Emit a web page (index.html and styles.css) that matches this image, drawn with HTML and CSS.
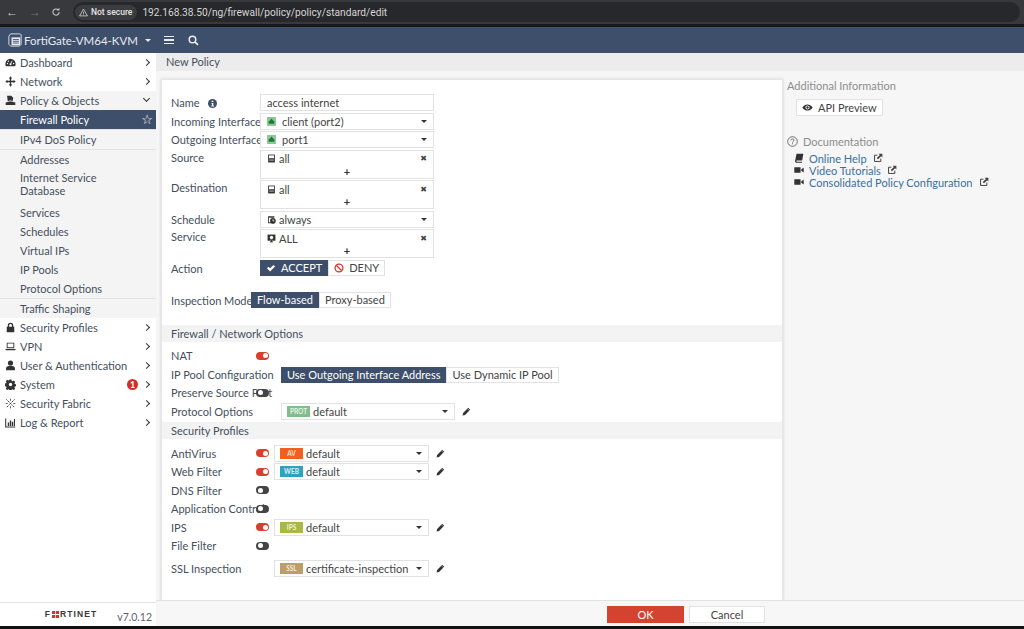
FILE: index.html
```html
<!DOCTYPE html>
<html lang="en">
<head>
    <meta charset="UTF-8" />
    <meta name="viewport" content="width=device-width, initial-scale=1.0" />
    <title>FortiGate-VM64-KVM - New Policy</title>
    <link rel="stylesheet" href="styles.css">
</head>
<body>

    <svg class="sprite" width="0" height="0">
        <symbol id="i-gauge" viewBox="0 0 16 16"><path d="M8 2.5A7.5 7.5 0 0 0 .5 10c0 1.300.3 2.500.9 3.500h13.200c.6-1 .9-2.200.9-3.500A7.500 7.500 0 0 0 8 2.500z" fill="currentColor"/><circle cx="8" cy="10.500" r="1.500" fill="#fff"/><path d="M8 10.500 10.500 5.500" stroke="#fff" stroke-width="1.200"/><circle cx="3.500" cy="9.500" r="1" fill="#fff"/><circle cx="5" cy="6" r="1" fill="#fff"/><circle cx="12.500" cy="9.500" r="1" fill="#fff"/></symbol>
        <symbol id="i-move" viewBox="0 0 16 16"><path d="M8 .5 10.500 3.500H9V7h3.500V5.500L15.500 8l-3 2.500V9H9v3.500h1.500L8 15.500l-2.500-3H7V9H3.500v1.500L.5 8l3-2.500V7H7V3.500H5.500z" fill="currentColor"/></symbol>
        <symbol id="i-policy" viewBox="0 0 16 16"><path d="M3 1h6l3 3 -1 5 -3-1.500L4 9zM1 11l3-1 4-1 4 1 3 1v3.500H1z" fill="currentColor"/></symbol>
        <symbol id="i-lock" viewBox="0 0 16 16"><path d="M4 7V5a4 4 0 0 1 8 0v2h1.500v8h-11V7zm2 0h4V5a2 2 0 0 0-4 0z" fill="currentColor"/></symbol>
        <symbol id="i-laptop" viewBox="0 0 16 16"><path d="M2.500 2.500h11v8h-11zm1.300 1.300v5.400h8.400V3.800zM.5 11.500h15v1l-1 1h-13l-1-1z" fill="currentColor" fill-rule="evenodd"/></symbol>
        <symbol id="i-user" viewBox="0 0 16 16"><circle cx="8" cy="4.500" r="3.800" fill="currentColor"/><path d="M1.500 15v-2.500C1.500 10 3.500 8.800 5.500 8.800h5c2 0 4 1.200 4 3.700V15z" fill="currentColor"/></symbol>
        <symbol id="i-gear" viewBox="0 0 16 16"><path d="M6.600.8h2.800l.4 2 1.400.6 1.700-1.100 2 2-1.100 1.700.6 1.400 2 .4v2.800l-2 .4-.6 1.400 1.100 1.700-2 2-1.700-1.100-1.400.6-.4 2H6.600l-.4-2-1.400-.6-1.700 1.100-2-2 1.100-1.700-.6-1.400-2-.4V6.600l2-.4.6-1.400-1.100-1.700 2-2 1.700 1.100 1.400-.6zM8 5.500a2.500 2.500 0 1 0 0 5 2.500 2.500 0 0 0 0-5z" fill="currentColor" fill-rule="evenodd"/></symbol>
        <symbol id="i-fabric" viewBox="0 0 16 16"><path d="M2 2l12 12M14 2 2 14" stroke="currentColor" stroke-width="1.300" stroke-dasharray="2.400 1"/><path d="M8 1v3M8 12v3M1 8h3M12 8h3" stroke="currentColor" stroke-width="1.100"/></symbol>
        <symbol id="i-chart" viewBox="0 0 16 16"><path d="M1 2v12.500h14" fill="none" stroke="currentColor" stroke-width="1.500"/><path d="M4 8h2v5H4zM7 5h2v8H7zm3 2h2v6h-2zm3-4h1.500v10H13z" fill="currentColor"/></symbol>
        <symbol id="i-iface" viewBox="0 0 16 16"><path d="M0 0h16v16H0z" fill="#8fc79a"/><path d="M3 12V7h2V5h2V3h2v2h2v2h2v5z" fill="#1c7a33"/></symbol>
        <symbol id="i-addr" viewBox="0 0 16 16"><path d="M2 1h12v14H2z" fill="#333"/><path d="M3.500 2.500h9v5h-9z" fill="#fff"/><path d="M4 10h8v1.500H4z" fill="#ddd"/></symbol>
        <symbol id="i-sched" viewBox="0 0 16 16"><path d="M2 2h11v3H3.500v8H7v1.500H2z" fill="#333"/><circle cx="10.500" cy="10.500" r="5" fill="#333"/><path d="M10.500 7.500v3h2.500" stroke="#fff" stroke-width="1.300" fill="none"/></symbol>
        <symbol id="i-svc" viewBox="0 0 16 16"><path d="M1 1h14v11H1z" fill="#333"/><circle cx="8" cy="6" r="3" fill="#fff"/><path d="M5 15l1.500-5h3l1.500 5z" fill="#333" stroke="#fff" stroke-width=".6"/></symbol>
        <symbol id="i-pen" viewBox="0 0 16 16"><path d="M11 1.500l3.500 3.500L5.500 14 1 15l1-4.500z" fill="currentColor"/><path d="M9.500 3 13 6.500" stroke="#fff" stroke-width=".9"/></symbol>
        <symbol id="i-ext" viewBox="0 0 16 16"><path d="M7 3.500H2.500v10h10V9" fill="none" stroke="currentColor" stroke-width="1.600"/><path d="M9 1h6v6l-2-2-5 5-2-2 5-5z" fill="currentColor"/></symbol>
        <symbol id="i-video" viewBox="0 0 16 16"><path d="M.5 3.500h10v9H.5zM11.500 7l4-3v8l-4-3z" fill="currentColor"/></symbol>
        <symbol id="i-book" viewBox="0 0 16 16"><path d="M4 1h11l-2 11H4.500c-1.200 0-1 2 0 2H13l-.3 1.500H3.500C1.800 15.500 1.500 14 1.800 12.500z" fill="currentColor"/></symbol>
    </svg>

    <div class="browser-bar">
        <span class="nav-btn">&#8592;</span>
        <span class="nav-btn nav-off">&#8594;</span>
        <svg class="reload" viewBox="0 0 16 16"><path d="M13 8a5 5 0 1 1-1.500-3.500" fill="none" stroke="currentColor" stroke-width="1.700"/><path d="M13.500 1v4.500H9z" fill="currentColor"/></svg>
        <div class="url-pill">
            <span class="secure-chip"><svg viewBox="0 0 16 16"><path d="M8 2 15 14H1z" fill="none" stroke="currentColor" stroke-width="1.300"/><path d="M8 6.500v4M8 11.500v1.200" stroke="currentColor" stroke-width="1.200"/></svg>Not secure</span>
            <span class="url-text">192.168.38.50/ng/firewall/policy/policy/standard/edit</span>
        </div>
    </div>
    <div class="browser-edge"></div>

    <header class="top-nav">
        <div class="device">
            <svg class="device-icon" viewBox="0 0 16 16"><path d="M1 3.500 3 1h11l1 1v11l-2 2H3l-2-2z" fill="none" stroke="currentColor" stroke-width="1"/><path d="M4 5h10v9H4z" fill="currentColor"/><path d="M5.500 7.500h7M5.500 9.500h7M5.500 11.500h7" stroke="#3e4f6b" stroke-width="1"/></svg>
            <span class="device-name">FortiGate-VM64-KVM</span>
            <span class="caret caret-light"></span>
        </div>
        <div class="burger"><i></i><i></i><i></i></div>
        <svg class="search" viewBox="0 0 16 16"><circle cx="6.500" cy="6.500" r="4.800" fill="none" stroke="currentColor" stroke-width="2.200"/><path d="M10 10l4.500 4.500" stroke="currentColor" stroke-width="2.500"/></svg>
    </header>

    <div class="app-body">
        <nav class="sidebar">
            <div class="menu">
                <div class="menu-item"><svg class="menu-icon"><use href="#i-gauge"/></svg>Dashboard<span class="chev"></span></div>
                <div class="menu-item"><svg class="menu-icon"><use href="#i-move"/></svg>Network<span class="chev"></span></div>
                <div class="menu-item menu-open"><svg class="menu-icon"><use href="#i-policy"/></svg>Policy &amp; Objects<span class="chev chev-down"></span></div>
                <div class="submenu">
                    <div class="sub-item sub-active">Firewall Policy<span class="star">&#9734;</span></div>
                    <div class="sub-item sub-ruled">IPv4 DoS Policy</div>
                    <div class="sub-item sub-ruled">Addresses</div>
                    <div class="sub-item sub-tall">Internet Service Database</div>
                    <div class="sub-item">Services</div>
                    <div class="sub-item">Schedules</div>
                    <div class="sub-item">Virtual IPs</div>
                    <div class="sub-item">IP Pools</div>
                    <div class="sub-item">Protocol Options</div>
                    <div class="sub-item sub-ruled">Traffic Shaping</div>
                </div>
                <div class="menu-item"><svg class="menu-icon"><use href="#i-lock"/></svg>Security Profiles<span class="chev"></span></div>
                <div class="menu-item"><svg class="menu-icon"><use href="#i-laptop"/></svg>VPN<span class="chev"></span></div>
                <div class="menu-item"><svg class="menu-icon"><use href="#i-user"/></svg>User &amp; Authentication<span class="chev"></span></div>
                <div class="menu-item"><svg class="menu-icon"><use href="#i-gear"/></svg>System<span class="badge">1</span><span class="chev chev-badge"></span></div>
                <div class="menu-item"><svg class="menu-icon"><use href="#i-fabric"/></svg>Security Fabric<span class="chev"></span></div>
                <div class="menu-item"><svg class="menu-icon"><use href="#i-chart"/></svg>Log &amp; Report<span class="chev"></span></div>
            </div>
            <div class="side-foot">
                <span class="logo">F<svg class="logo-o" viewBox="0 0 9 9"><path d="M0 0h4v4H0zM5 0h4v4H5zM0 5h4v4H0zM5 5h4v4H5z" fill="#d8322a"/></svg>RTINET</span>
                <span class="version">v7.0.12</span>
            </div>
        </nav>

        <main class="page">
            <div class="page-title">New Policy</div>
            <div class="page-split">
                <section class="card">
                    <div class="fields">
                        <div class="row"><label>Name <svg class="info" viewBox="0 0 16 16"><circle cx="8" cy="8" r="8" fill="currentColor"/><path d="M6.500 3h3v2.500h-3zM6 7h3.500v5H11v1.500H5.500V12H7V8.500H6z" fill="#fff"/></svg></label><div class="box box-text">access internet</div></div>
                        <div class="row"><label>Incoming Interface</label><div class="box"><svg class="if-icon"><use href="#i-iface"/></svg>client (port2)<span class="caret"></span></div></div>
                        <div class="row"><label>Outgoing Interface</label><div class="box"><svg class="if-icon"><use href="#i-iface"/></svg>port1<span class="caret"></span></div></div>
                        <div class="row row-multi"><label>Source</label><div class="box box-multi"><div class="entry"><svg class="obj-icon"><use href="#i-addr"/></svg>all<span class="close">&#10006;</span></div><div class="plus">+</div></div></div>
                        <div class="row row-multi"><label>Destination</label><div class="box box-multi"><div class="entry"><svg class="obj-icon"><use href="#i-addr"/></svg>all<span class="close">&#10006;</span></div><div class="plus">+</div></div></div>
                        <div class="row"><label>Schedule</label><div class="box"><svg class="obj-icon"><use href="#i-sched"/></svg>always<span class="caret"></span></div></div>
                        <div class="row row-multi"><label>Service</label><div class="box box-multi"><div class="entry"><svg class="obj-icon"><use href="#i-svc"/></svg>ALL<span class="close">&#10006;</span></div><div class="plus">+</div></div></div>
                        <div class="row"><label>Action</label>
                            <div class="switch">
                                <span class="opt opt-on opt-action"><svg class="opt-icon" viewBox="0 0 16 16"><path d="M1.500 8.500 4 6l2.500 2.500L12 3l2.500 2.500-8 8z" fill="currentColor"/></svg>ACCEPT</span>
                                <span class="opt opt-action"><svg class="opt-icon opt-deny" viewBox="0 0 16 16"><circle cx="8" cy="8" r="6.300" fill="none" stroke="currentColor" stroke-width="2"/><path d="M3.500 3.500l9 9" stroke="currentColor" stroke-width="2"/></svg>DENY</span>
                            </div>
                        </div>
                        <div class="row row-mode"><label class="label-auto">Inspection Mode</label>
                            <div class="switch">
                                <span class="opt opt-on">Flow-based</span>
                                <span class="opt">Proxy-based</span>
                            </div>
                        </div>
                    </div>

                    <h3 class="section-head">Firewall / Network Options</h3>
                    <div class="fields">
                        <div class="row row-toggle"><label class="label-wide">NAT</label><span class="toggle toggle-on"></span></div>
                        <div class="row"><label class="label-pool">IP Pool Configuration</label>
                            <div class="switch">
                                <span class="opt opt-on">Use Outgoing Interface Address</span>
                                <span class="opt">Use Dynamic IP Pool</span>
                            </div>
                        </div>
                        <div class="row row-toggle"><label class="label-wide">Preserve Source Port</label><span class="toggle"></span></div>
                        <div class="row"><label class="label-pool">Protocol Options</label>
                            <div class="box box-proto"><span class="tag tag-prot">PROT</span>default<span class="caret"></span></div>
                            <svg class="pen"><use href="#i-pen"/></svg>
                        </div>
                    </div>

                    <h3 class="section-head">Security Profiles</h3>
                    <div class="fields fields-sec">
                        <div class="row"><label class="label-sec">AntiVirus</label><span class="toggle toggle-on"></span>
                            <div class="box box-prof"><span class="tag tag-av">AV</span>default<span class="caret"></span></div><svg class="pen"><use href="#i-pen"/></svg></div>
                        <div class="row"><label class="label-sec">Web Filter</label><span class="toggle toggle-on"></span>
                            <div class="box box-prof"><span class="tag tag-web">WEB</span>default<span class="caret"></span></div><svg class="pen"><use href="#i-pen"/></svg></div>
                        <div class="row"><label class="label-sec">DNS Filter</label><span class="toggle"></span></div>
                        <div class="row"><label class="label-sec">Application Control</label><span class="toggle"></span></div>
                        <div class="row"><label class="label-sec">IPS</label><span class="toggle toggle-on"></span>
                            <div class="box box-prof"><span class="tag tag-ips">IPS</span>default<span class="caret"></span></div><svg class="pen"><use href="#i-pen"/></svg></div>
                        <div class="row"><label class="label-sec">File Filter</label><span class="toggle"></span></div>
                        <div class="row row-ssl"><label class="label-sec">SSL Inspection</label><span class="toggle-gap"></span>
                            <div class="box box-prof"><span class="tag tag-ssl">SSL</span>certificate-inspection<span class="caret"></span></div><svg class="pen"><use href="#i-pen"/></svg></div>
                    </div>
                </section>

                <aside class="info-panel">
                    <div class="panel-title">Additional Information</div>
                    <div class="api-btn"><svg class="eye" viewBox="0 0 16 16"><path d="M.5 8C2.500 4.800 5 3.500 8 3.500s5.500 1.300 7.500 4.500c-2 3.200-4.500 4.500-7.500 4.500S2.500 11.200.5 8z" fill="currentColor"/><circle cx="8" cy="8" r="3" fill="#fff"/><circle cx="8" cy="8" r="1.700" fill="currentColor"/></svg>API Preview</div>
                    <div class="doc-head"><svg class="help" viewBox="0 0 16 16"><circle cx="8" cy="8" r="7" fill="none" stroke="currentColor" stroke-width="1.200"/><path d="M5.800 6.300C5.800 4.900 6.900 4.300 8 4.300s2.200.7 2.200 1.900c0 1.500-2.200 1.700-2.200 3.300M8 10.700V12" fill="none" stroke="currentColor" stroke-width="1.300"/></svg>Documentation</div>
                    <div class="doc-link"><svg class="doc-icon"><use href="#i-book"/></svg><a>Online Help</a><svg class="ext"><use href="#i-ext"/></svg></div>
                    <div class="doc-link"><svg class="doc-icon"><use href="#i-video"/></svg><a>Video Tutorials</a><svg class="ext"><use href="#i-ext"/></svg></div>
                    <div class="doc-link"><svg class="doc-icon"><use href="#i-video"/></svg><a>Consolidated Policy Configuration</a><svg class="ext"><use href="#i-ext"/></svg></div>
                </aside>
            </div>
            <footer class="page-foot">
                <button class="btn btn-ok">OK</button>
                <button class="btn">Cancel</button>
            </footer>
        </main>
    </div>
    <div class="browser-edge edge-bottom"></div>

</body>
</html>
```

FILE: styles.css
```css
body {
    font-family: "Lato", sans-serif;
    font-size: 11px;
    color: #444;
    margin: 0;
    width: 1024px;
    height: 629px;
    overflow: hidden;
    display: flex;
    flex-direction: column;
    background-color: #fff;
}

.sprite {
    position: absolute;
}

/* browser chrome */
.browser-bar {
    height: 24px;
    background-color: #38393c;
    color: #c8c8c8;
    display: flex;
    align-items: center;
    font-family: "Roboto", sans-serif;
    flex: none;
}

.nav-btn {
    width: 12px;
    margin-left: 6px;
    margin-right: 5px;
    font-size: 12px;
    text-align: center;
}

.nav-off {
    color: #77787a;
}

.reload {
    width: 10px;
    height: 10px;
    margin-left: 5px;
}

.url-pill {
    margin-left: 12px;
    flex: 1;
    height: 20px;
    margin-right: 4px;
    border-radius: 10px;
    background-color: #27282b;
    display: flex;
    align-items: center;
    padding-left: 2px;
}

.secure-chip {
    display: flex;
    align-items: center;
    height: 15px;
    padding: 0 5px 0 4px;
    border-radius: 8px;
    background-color: #3b3c3f;
    color: #e4e4e4;
    font-size: 8.5px;
    font-weight: 500;
}

.secure-chip svg {
    width: 9px;
    height: 9px;
    margin-right: 3px;
}

.url-text {
    margin-left: 5px;
    color: #d6d6d6;
    font-size: 10.2px;
}

.browser-edge {
    height: 3px;
    background-color: #17181a;
    flex: none;
}

/* fortigate header */
.top-nav {
    height: 26px;
    background-color: #3e4f6b;
    color: #e8ebf0;
    display: flex;
    align-items: center;
    flex: none;
}

.device {
    width: 156px;
    display: flex;
    align-items: center;
    padding-left: 8px;
    box-sizing: border-box;
}

.device-icon {
    width: 14px;
    height: 14px;
    margin-right: 2px;
}

.device-name {
    font-size: 11.5px;
    flex: 1;
}

.caret {
    border-left: 3px solid transparent;
    border-right: 3px solid transparent;
    border-top: 3px solid #333;
}

.caret-light {
    border-top-color: #e8ebf0;
    margin-right: 5px;
}

.burger {
    margin-left: 8px;
    width: 10px;
}

.burger i {
    display: block;
    height: 1.500px;
    background-color: #e8ebf0;
    margin: 2px 0;
}

.search {
    width: 11px;
    height: 11px;
    margin-left: 14px;
}

.app-body {
    flex: 1;
    display: flex;
    min-height: 0;
}

/* sidebar */
.sidebar {
    width: 156px;
    flex: none;
    display: flex;
    flex-direction: column;
    background-color: #fff;
    border-right: 0;
}

.menu {
    flex: 1;
}

.menu-item {
    height: 19px;
    display: flex;
    align-items: center;
    padding-left: 5px;
    color: #454f5c;
    position: relative;
}

.menu-open {
    background-color: #f4f4f4;
}

.menu-icon {
    width: 11px;
    height: 11px;
    margin-right: 4px;
    color: #333;
    flex: none;
}

.chev {
    position: absolute;
    right: 7px;
    top: 7px;
    width: 4px;
    height: 4px;
    border-top: 1.500px solid #333;
    border-right: 1.500px solid #333;
    transform: rotate(45deg);
}

.chev-down {
    transform: rotate(135deg);
    top: 5px;
}

.badge {
    position: absolute;
    right: 18px;
    top: 4px;
    width: 11px;
    height: 11px;
    border-radius: 50%;
    background-color: #cf2f26;
    color: #fff;
    font-size: 9px;
    font-weight: 700;
    line-height: 11px;
    text-align: center;
}

.submenu {
    background-color: #f4f4f4;
}

.sub-item {
    height: 19px;
    line-height: 19px;
    padding-left: 20px;
    color: #454f5c;
    position: relative;
}

.sub-ruled {
    border-top: 1px solid #e2e2e2;
    height: 19px;
}

.sub-active {
    background-color: #3e4f6b;
    color: #fff;
}

.sub-tall {
    height: 31px;
    width: 90px;
    line-height: 12.500px;
    padding-top: 3px;
    padding-bottom: 0;
    white-space: normal;
}

.star {
    position: absolute;
    right: 3px;
    top: 0;
    font-size: 13px;
    font-family: "DejaVu Sans", sans-serif;
    color: #fff;
}

.side-foot {
    height: 23px;
    border-top: 1px solid #e4e4e4;
    display: flex;
    align-items: center;
    justify-content: flex-end;
    padding-right: 4px;
    flex: none;
}

.logo {
    font-family: "Liberation Sans", sans-serif;
    font-weight: 700;
    font-size: 8.500px;
    letter-spacing: 1.100px;
    color: #3a3a3a;
    display: flex;
    align-items: center;
    margin-right: 20px;
    margin-top: -1px;
}

.logo-o {
    width: 7px;
    height: 7px;
    margin: 0 1px;
}

.version {
    color: #5a6270;
    font-size: 10.500px;
    margin-top: 4px;
}

/* main */
.page {
    flex: 1;
    display: flex;
    flex-direction: column;
    background-color: #f6f6f6;
    min-width: 0;
}

.page-title {
    height: 18px;
    line-height: 18px;
    padding-left: 10px;
    background-color: #ececec;
    color: #454f5c;
    flex: none;
}

.page-split {
    flex: 1;
    display: flex;
    padding: 8px 0 0 5px;
    min-height: 0;
}

.card {
    width: 622px;
    background-color: #fff;
    border: 1px solid #e6e6e6;
    border-bottom: 0;
    box-shadow: 0 0 3px rgba(0,0,0,0.15);
    padding-top: 14px;
    box-sizing: border-box;
    flex: none;
}

.fields {
    padding-left: 9px;
}

.row {
    display: flex;
    align-items: center;
    min-height: 17px;
    margin-bottom: 1.500px;
}

.row label {
    width: 89px;
    flex: none;
    color: #454f5c;
    white-space: nowrap;
}

.row-multi {
    align-items: flex-start;
}

.row-multi label {
    padding-top: 1px;
}

.row .label-auto {
    width: 80px;
}

.row .label-wide {
    width: 85px;
}

.row .label-pool {
    width: 110px;
}

.row .label-sec {
    width: 85px;
}

.row-mode {
    margin-top: 15px;
    margin-bottom: 16px;
}

.row-toggle {
    min-height: 16.500px;
    margin-bottom: 2px;
}

.info {
    width: 9px;
    height: 9px;
    color: #3e4f6b;
    margin-left: 6px;
    vertical-align: -1px;
}

.box {
    width: 174px;
    height: 17px;
    box-sizing: border-box;
    border: 1px solid #e2e2e2;
    background-color: #fff;
    display: flex;
    align-items: center;
    padding-left: 6px;
    padding-right: 6px;
    color: #444;
}

.box .caret {
    margin-left: auto;
}

.box-multi {
    height: 29px;
    display: block;
    padding-top: 1px;
}

.entry {
    display: flex;
    align-items: center;
    height: 14px;
}

.close {
    margin-left: auto;
    font-size: 8px;
    color: #444;
    font-family: "DejaVu Sans", sans-serif;
}

.plus {
    text-align: center;
    font-weight: 700;
    font-size: 11px;
    line-height: 12px;
    color: #333;
}

.if-icon {
    width: 9px;
    height: 9px;
    margin-right: 6px;
}

.obj-icon {
    width: 9px;
    height: 9px;
    margin-right: 3px;
}

.switch {
    display: flex;
}

.opt {
    height: 16px;
    line-height: 14px;
    box-sizing: border-box;
    border: 1px solid #e2e2e2;
    padding: 0 5px;
    display: flex;
    align-items: center;
    color: #444;
    white-space: nowrap;
    background-color: #fff;
}

.opt-on {
    background-color: #3e4f6b;
    border-color: #3e4f6b;
    color: #fff;
}

.opt-icon {
    width: 10px;
    height: 10px;
    margin-right: 5px;
}

.opt-deny {
    color: #d0392b;
}

.section-head {
    margin: 0 0 6px;
    height: 17px;
    line-height: 17px;
    padding-left: 9px;
    background-color: #f3f3f3;
    font-weight: 400;
    font-size: 11px;
    color: #454f5c;
}

.box-proto {
    width: 174px;
    padding-left: 5px;
    width: 174px;
}

.tag {
    height: 11px;
    width: 23px;
    line-height: 11px;
    text-align: center;
    font-size: 6.500px;
    font-weight: 700;
    color: rgba(255,255,255,0.85);
    margin-right: 3px;
    flex: none;
}

.tag-prot {
    background-color: #82bd8c;
}

.tag-av {
    background-color: #f2601e;
}

.tag-web {
    background-color: #2fa2c1;
}

.tag-ips {
    background-color: #aab93f;
}

.tag-ssl {
    background-color: #bd9d68;
}

.pen {
    width: 9px;
    height: 9px;
    color: #333;
    margin-left: 7px;
}

.toggle {
    width: 13px;
    height: 8px;
    border-radius: 4px;
    background-color: #444;
    position: relative;
    flex: none;
}

.toggle::after {
    content: "";
    position: absolute;
    left: 1.500px;
    top: 1.500px;
    width: 5px;
    height: 5px;
    border-radius: 50%;
    background-color: #fff;
}

.toggle-on {
    background-color: #d8402c;
}

.toggle-on::after {
    left: auto;
    right: 1.500px;
}

.toggle-gap {
    width: 13px;
    flex: none;
}

.box-prof {
    width: 155px;
    margin-left: 5px;
    padding-left: 5px;
}

.row-ssl {
    margin-top: 6px;
}

/* right column */
.info-panel {
    flex: 1;
    padding-left: 4px;
    padding-top: -1px;
    color: #888;
}

.panel-title {
    color: #8d8d8d;
}

.api-btn {
    display: inline-flex;
    align-items: center;
    height: 17px;
    box-sizing: border-box;
    border: 1px solid #e2e2e2;
    background-color: #fff;
    margin: 7px 0 0 9px;
    padding: 0 5px;
    color: #444;
}

.eye {
    width: 11px;
    height: 11px;
    margin-right: 5px;
    color: #333;
}

.doc-head {
    display: flex;
    align-items: center;
    margin-top: 19px;
    margin-bottom: 4px;
    color: #8d8d8d;
}

.help {
    width: 11px;
    height: 11px;
    margin-right: 5px;
    color: #555;
}

.doc-link {
    display: flex;
    align-items: center;
    height: 12px;
    padding-left: 7px;
}

.doc-icon {
    width: 10px;
    height: 10px;
    color: #333;
    margin-right: 5px;
}

.doc-link a {
    color: #3b6f9e;
}

.ext {
    width: 10px;
    height: 10px;
    color: #444;
    margin-left: 6px;
}

.page-foot {
    height: 26px;
    flex: none;
    display: flex;
    gap: 5px;
    padding: 5px 0 0 451px;
    box-sizing: border-box;
    background-color: #f7f7f7;
    border-top: 1px solid #e2e2e2;
}

.btn {
    width: 76px;
    height: 17px;
    box-sizing: border-box;
    border: 1px solid #e2e2e2;
    background-color: #fff;
    color: #444;
    font-family: inherit;
    font-size: 11px;
    padding: 0;
}

.btn-ok {
    width: 77px;
    background-color: #d24430;
    border-color: #d24430;
    color: #fff;
}

.edge-bottom {
    background-color: #111;
}
```
